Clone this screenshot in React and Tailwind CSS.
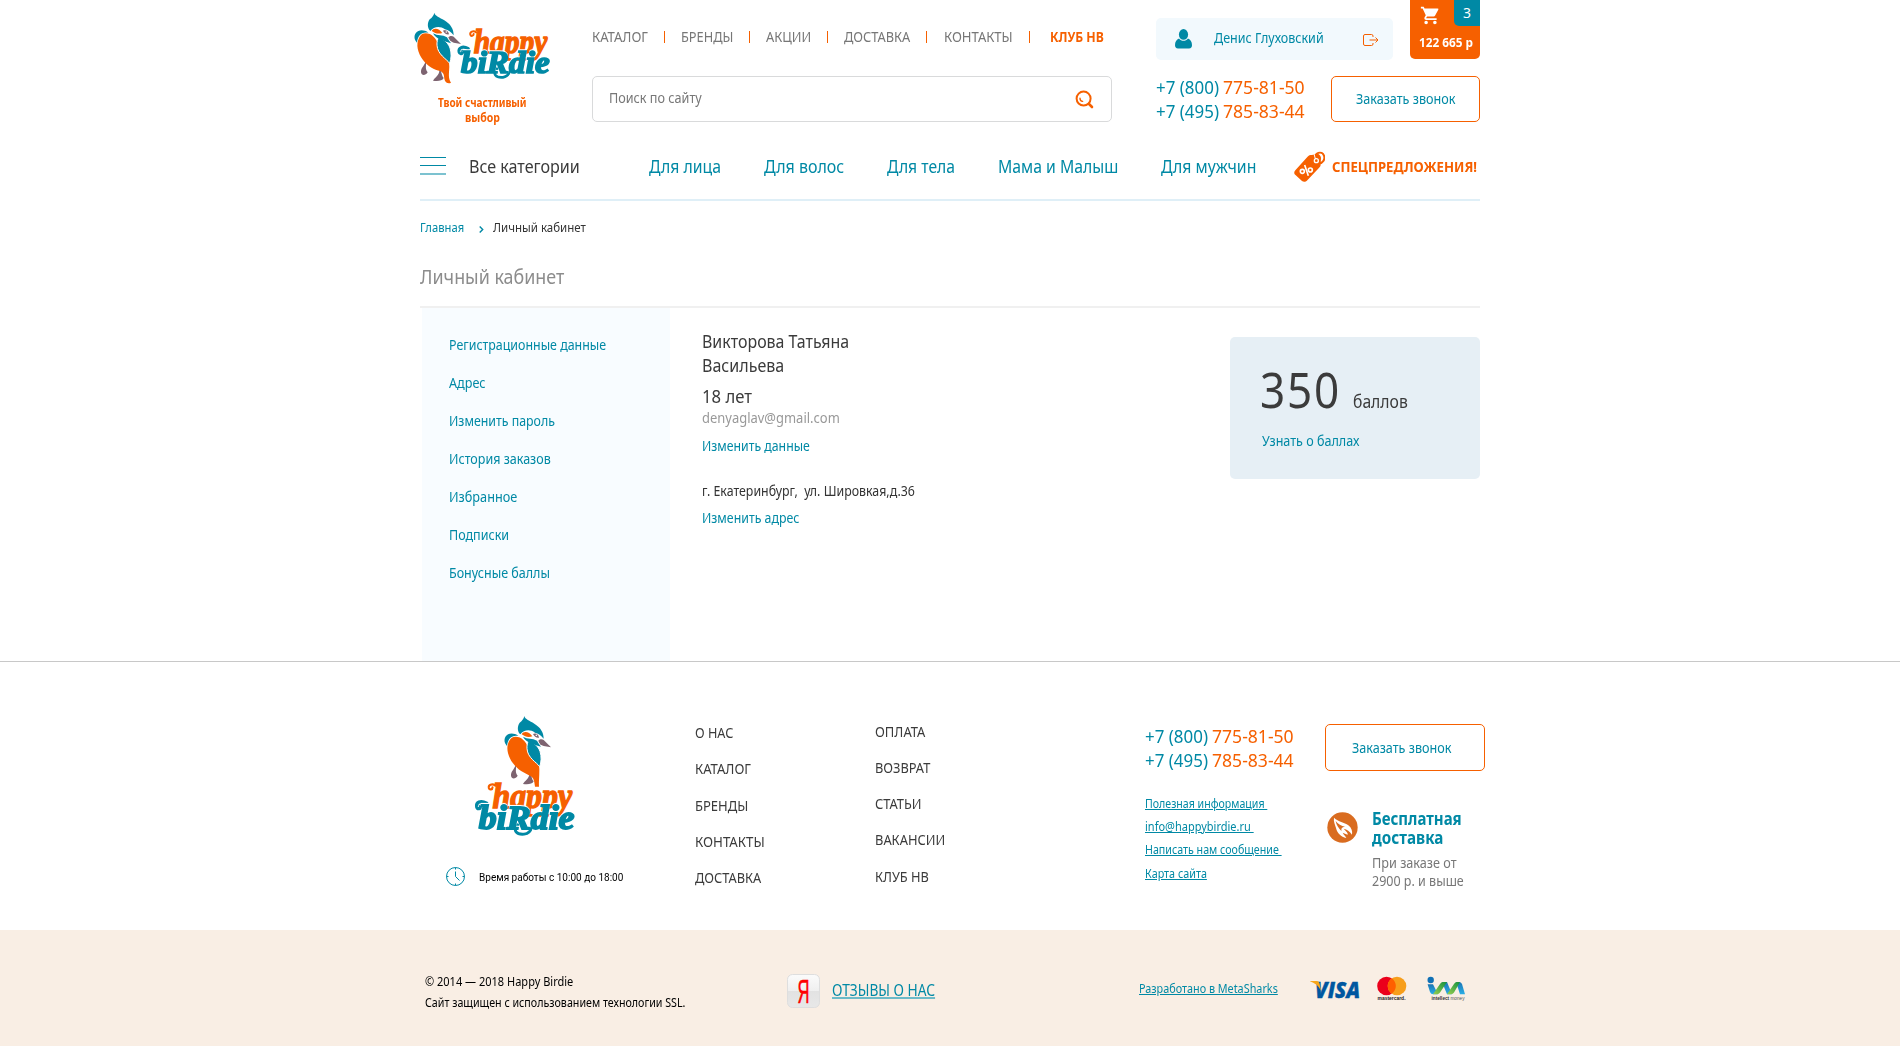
import React, { useLayoutEffect, useRef } from "react";
import { MdShoppingCart } from "react-icons/md";

/* One line of text, condensed to the width of its box.
   Unless flush, a pixel of side bearing is kept on both sides. */
function Fit({ className = "", inner = "", flush = false, children }) {
  const box = useRef(null);
  const text = useRef(null);
  useLayoutEffect(() => {
    const room = box.current.clientWidth - (flush ? 0 : 2);
    text.current.style.transform = `scaleX(${room / text.current.offsetWidth})`;
  }, [children, flush]);
  return (
    <span ref={box} className={`block shrink-0 ${flush ? "" : "pl-px"} ${className}`}>
      <span ref={text} className={`inline-block origin-left whitespace-pre align-top ${inner}`}>
        {children}
      </span>
    </span>
  );
}

function Bird({ foot = true }) {
  return (
    <g>
      <path fill="#7d6370" d="M62 184 C66 196 58 204 68 217 C62 227 50 229 48 217 C47 204 58 198 62 184Z" />
      <path fill="#7d6370" d="M106 208 C110 218 110 228 116 234 C112 243 98 244 84 242 C88 234 104 226 103 210Z" />
      <path
        fill="#f66000"
        d={
          foot
            ? "M62 100 C80 100 92 114 101 134 C112 158 134 168 133 200 C132 222 129 234 138 248 C130 252 120 248 118 236 C117 224 116 219 106 213 C88 209 68 200 54 180 C38 158 32 134 42 114 C47 104 53 100 62 100Z"
            : "M62 100 C80 100 92 114 101 134 C112 158 134 168 133 200 C133 222 131 238 132 250 L120 250 C118 234 117 224 106 218 C88 209 68 200 54 180 C38 158 32 134 42 114 C47 104 53 100 62 100Z"
        }
      />
      <path fill="#0089a5" d="M29 116 C26 98 40 86 60 92 C66 94 68 96 70 98 C50 94 38 106 36 128 C33 124 30 120 29 116Z" />
      <path fill="#0089a5" stroke="#fff" strokeWidth="3" d="M101 110 C112 118 128 124 135 144 C140 160 139 176 134 190 C124 176 98 164 96 136 C95 126 98 116 101 110Z" />
      <path fill="#0089a5" d="M88 38 C90 48 104 52 118 61 C136 72 146 86 146 106 C138 96 130 90 120 88 C104 76 86 80 76 93 C66 84 67 68 74 58 C82 52 86 46 88 38Z" />
      <path fill="#f66000" d="M80 93 C86 82 102 84 112 99 C100 103 90 100 80 93Z" />
      <path fill="#7d6370" d="M114 92 C122 88 130 92 132 103 C124 104 118 100 114 92Z" />
      <circle cx="124" cy="96" r="2.5" fill="#fff" />
      <path fill="#7d6370" d="M130 112 C136 106 142 108 146 110 L168 132 L146 128 C138 126 132 120 130 112Z" />
      <path fill="#0089a5" d="M84 100 C98 108 112 104 126 112 C130 120 134 124 138 130 C120 124 92 118 84 100Z" />
    </g>
  );
}

function Wordmark() {
  return (
    <g fontFamily="'Liberation Serif', serif" fontWeight="700" fontStyle="italic">
      <path d="M214 97 C204 90 194 96 196 104 C198 110 206 108 206 102" fill="none" stroke="#f66000" strokeWidth="6" strokeLinecap="round" />
      <text x="206" y="159" fontSize="98" textLength="221" lengthAdjust="spacingAndGlyphs" fill="#f66000" stroke="#f66000" strokeWidth="4">
        happy
      </text>
      <path d="M190 146 C172 136 160 144 162 156 C164 164 174 162 173 154" fill="none" stroke="#0089a5" strokeWidth="9" strokeLinecap="round" />
      <path d="M276 206 C262 222 272 234 294 232 C306 230 312 224 314 214" fill="none" stroke="#0089a5" strokeWidth="8" strokeLinecap="round" />
      <text
        className="drop-shadow-[0_-3px_0_#fff]"
        x="168"
        y="218"
        fontSize="96"
        textLength="266"
        lengthAdjust="spacingAndGlyphs"
        fill="#0089a5"
        stroke="#0089a5"
        strokeWidth="5"
      >
        biRdie
      </text>
    </g>
  );
}

function Phones() {
  return (
    <div className="text-[18px] leading-6">
      {[
        ["+7 (800)", "775-81-50"],
        ["+7 (495)", "785-83-44"],
      ].map(([code, rest]) => (
        <div key={code} className="flex gap-1">
          <Fit flush className="w-[63px] text-[#0089a5]">{code}</Fit>
          <Fit flush className="w-[82px] text-[#f66000]">{rest}</Fit>
        </div>
      ))}
    </div>
  );
}

function Sep() {
  return <span className="mt-1 block h-3 w-px shrink-0 bg-[#f66000]" />;
}

function Header() {
  return (
    <header>
      <div className="flex h-[122px]">
        <div className="-ml-[7px] flex w-[138px] shrink-0 flex-col items-center pt-3">
          <svg className="overflow-visible" width="138" height="73" viewBox="24 36 414 219">
            <Bird />
            <Wordmark />
          </svg>
          <div className="mt-2.5 flex flex-col items-center text-[12px] font-bold leading-[15px] text-[#f66000]">
            <Fit flush className="w-[89px]">Твой счастливый</Fit>
            <Fit flush className="w-[35px]">выбор</Fit>
          </div>
        </div>

        <div className="ml-[41px] w-[520px] shrink-0">
          <nav className="-ml-px flex gap-[15px] pt-[27px] text-sm text-[#777]">
            <Fit className="w-[58px]">КАТАЛОГ</Fit>
            <Sep />
            <Fit className="w-[54px]">БРЕНДЫ</Fit>
            <Sep />
            <Fit className="w-[47px]">АКЦИИ</Fit>
            <Sep />
            <Fit className="w-[68px]">ДОСТАВКА</Fit>
            <Sep />
            <Fit className="ml-px w-[71px]">КОНТАКТЫ</Fit>
            <Sep />
            <Fit className="ml-1 w-[56px] font-bold text-[#f66000]">КЛУБ НВ</Fit>
          </nav>
          <div className="mt-[29px] flex h-[46px] items-center justify-between rounded-[5px] border border-[#d9dadb] pl-[15px] pr-[17px]">
            <Fit className="-mt-0.5 w-[95px] text-sm text-[#777]">Поиск по сайту</Fit>
            <svg width="19" height="19" viewBox="0 0 19 19" fill="none" stroke="#f66000" strokeWidth="2" strokeLinecap="round">
              <circle cx="8.6" cy="8.6" r="7" />
              <path d="M14 14l3 3" strokeWidth="2.6" />
              <path d="M5 8.2c0 1.9 1 3 2.6 3.2" strokeWidth="1.4" />
            </svg>
          </div>
        </div>

        <div className="ml-11 w-[324px] shrink-0">
          <div className="flex h-[76px] items-start justify-between">
            <div className="mt-[18px] flex h-[42px] w-[237px] items-center rounded-[5px] bg-[#f2f9fd] pl-[19px]">
              <svg width="17" height="20" viewBox="0 0 17 20" fill="#0089a5">
                <ellipse cx="8.5" cy="5.4" rx="4.6" ry="5.3" />
                <path d="M4 9.5c1.2 1.6 2.700 2.300 4.500 2.300s3.300-.7 4.500-2.300c2.500.8 4 3.300 4 6.800 0 2-1 3.200-3 3.200H3c-2 0-3-1.200-3-3.200 0-3.500 1.500-6 4-6.800z" />
              </svg>
              <Fit className="-mt-0.5 ml-[21px] w-[112px] text-sm text-[#0089a5]">Денис Глуховский</Fit>
              <svg className="ml-[38px] mt-0.5" width="16" height="12" viewBox="0 0 16 12" fill="none" stroke="#f66000">
                <path d="M10 3V2Q10 .5 8.500.5H2Q.5.5.5 2v8q0 1.500 1.500 1.500h6.500q1.500 0 1.500-1.500V9" />
                <path d="M6.500 6h8.500M12.500 3.500L15 6l-2.500 2.500" />
              </svg>
            </div>
            <div className="flex h-[59px] w-[70px] flex-col rounded-b-[5px] bg-[#f66000] text-white">
              <div className="flex justify-between pl-2.5">
                <MdShoppingCart className="mt-[5px]" size={21} />
                <span className="flex h-[26px] w-[26px] items-center justify-center rounded-bl-[5px] bg-[#0089a5] text-sm">3</span>
              </div>
              <Fit flush className="ml-[9px] mt-2 w-[54px] text-[12px] font-bold leading-[18px]">122 665 р</Fit>
            </div>
          </div>
          <div className="flex justify-between">
            <div className="-mt-px">
              <Phones />
            </div>
            <button className="flex h-[46px] w-[149px] items-center justify-center rounded-[5px] border border-[#f66000] text-sm text-[#0089a5]">
              <Fit flush className="w-[99px]">Заказать звонок</Fit>
            </button>
          </div>
        </div>
      </div>

      <nav className="mt-7 flex h-[51px] items-start border-b-2 border-[#dfeff7] text-[18px] leading-8 text-[#0089a5]">
        <span className="mt-[7px] flex w-[26px] flex-col gap-[7px]">
          <span className="h-px bg-[#0089a5]" />
          <span className="h-px bg-[#0089a5]" />
          <span className="h-0.5 bg-[#7cc2d0]" />
        </span>
        <Fit className="ml-[22px] w-[113px] text-[#3b3b3b]">Все категории</Fit>
        <Fit className="ml-[67px] w-[74px]">Для лица</Fit>
        <Fit className="ml-[41px] w-[82px]">Для волос</Fit>
        <Fit className="ml-[41px] w-[70px]">Для тела</Fit>
        <Fit flush className="ml-[42px] w-[120px]">Мама и Малыш</Fit>
        <Fit className="ml-[42px] w-[97px]">Для мужчин</Fit>
        <svg className="ml-[37px] mt-px shrink-0" width="31" height="31" viewBox="0 0 93 93">
          <path d="M2 70 C0 66 0 62 4 58 L40 18 C44 13 48 12 54 12 L68 8 C74 7 80 13 81 20 L80 40 C80 46 78 48 74 52 L40 88 C34 94 28 93 24 90Z" fill="#f66000" />
          <path d="M62 26 C60 4 84 -2 90 14 C94 26 86 36 76 37" fill="none" stroke="#f66000" strokeWidth="6" />
          <path d="M60 9 L66 30" stroke="#fff" strokeWidth="3" />
          <circle cx="67" cy="29" r="6" fill="#f66000" stroke="#fff" strokeWidth="4" />
          <g fill="none" stroke="#fff" strokeWidth="5">
            <circle cx="25" cy="61" r="6" />
            <circle cx="49" cy="57" r="6" />
            <path d="M32 42 L43 74" />
          </g>
        </svg>
        <Fit className="ml-1.5 w-[147px] text-[15px] font-bold text-[#f66000]">СПЕЦПРЕДЛОЖЕНИЯ!</Fit>
      </nav>
    </header>
  );
}

const sections = [
  ["Регистрационные данные", "w-[159px]"],
  ["Адрес", "w-[39px]"],
  ["Изменить пароль", "w-[108px]"],
  ["История заказов", "w-[104px]"],
  ["Избранное", "w-[70px]"],
  ["Подписки", "w-[62px]"],
  ["Бонусные баллы", "w-[103px]"],
];

function Account() {
  return (
    <main>
      <div className="mt-4 flex text-[13px] leading-5">
        <Fit flush className="w-[44px] text-[#0089a5]">Главная</Fit>
        <svg className="ml-[15px] mt-[9px]" width="5" height="7" viewBox="0 0 5 7" fill="none" stroke="#0089a5" strokeWidth="1.4">
          <path d="M.7.5l3 3-3 3" />
        </svg>
        <Fit flush className="ml-[9px] w-[93px] text-[#333]">Личный кабинет</Fit>
      </div>
      <div className="mt-[26px] border-b-2 border-[#f0f0f0] pb-[15px]">
        <Fit flush className="w-[144px] text-xl text-[#8c8c8c]">Личный кабинет</Fit>
      </div>
      <div className="flex h-[353px] items-start">
        <aside className="ml-0.5 flex h-full w-[248px] shrink-0 flex-col gap-[18px] bg-[#f8fcff] pl-[26px] pt-[27px] text-sm text-[#0089a5]">
          {sections.map(([label, width]) => (
            <Fit key={label} className={width}>{label}</Fit>
          ))}
        </aside>
        <section className="ml-[31px] pt-[21px] text-sm">
          <div className="text-[18px] leading-6 text-[#3b3b3b]">
            <Fit className="w-[149px]">Викторова Татьяна</Fit>
            <Fit className="w-[84px]">Васильева</Fit>
            <Fit className="mt-[7px] w-[52px]">18 лет</Fit>
          </div>
          <Fit className="w-[140px] text-[#999]">denyaglav@gmail.com</Fit>
          <Fit className="mt-2 w-[110px] text-[#0089a5]">Изменить данные</Fit>
          <Fit className="mt-[25px] w-[215px] text-[#333]">г. Екатеринбург,  ул. Шировкая,д.36</Fit>
          <Fit className="mt-[7px] w-[99px] text-[#0089a5]">Изменить адрес</Fit>
        </section>
        <section className="ml-auto mt-[29px] h-[142px] w-[250px] rounded-[5px] bg-[#e6eff5] pl-[31px] pt-[22px]">
          <div className="flex items-baseline text-[#3b3b3b]">
            <Fit flush className="-ml-px w-[81px] text-[50px] leading-[60px]" inner="tracking-[0.04em]">350</Fit>
            <Fit className="ml-[11px] w-[57px] text-[18px] leading-6">баллов</Fit>
          </div>
          <Fit className="mt-3 w-[99px] text-sm text-[#0089a5]">Узнать о баллах</Fit>
        </section>
      </div>
    </main>
  );
}

function FooterColumn({ className, items }) {
  return (
    <div className={`flex flex-col gap-4 text-sm text-[#3b3b3b] ${className}`}>
      {items.map(([label, width]) => (
        <Fit flush key={label} className={width}>{label}</Fit>
      ))}
    </div>
  );
}

function Footer() {
  return (
    <footer className="border-t border-[#c8c8c8]">
      <div className="mx-auto flex h-[268px] w-[1060px] items-start">
        <div className="ml-[26px] w-[180px] shrink-0 pt-[52px]">
          <svg className="ml-[27px] overflow-visible" width="102" height="122" viewBox="130 42 306 366">
            <g transform="translate(196 10)">
              <Bird foot={false} />
            </g>
            <g transform="translate(-34 152) scale(1.08)">
              <Wordmark />
            </g>
          </svg>
          <div className="mt-[31px] flex h-[19px] items-center">
            <svg width="19" height="19" viewBox="0 0 19 19" fill="none" stroke="#0089a5">
              <circle cx="9.500" cy="9.500" r="9" />
              <path d="M9.500 4.500v5l4 4M9.500.5v2M9.500 16.500v2M.5 9.500h2M16.500 9.500h2" />
            </svg>
            <Fit flush className="ml-3.5 mt-0.5 w-[144px] font-['Roboto',sans-serif] text-[11px] leading-4 text-black">Время работы с 10:00 до 18:00</Fit>
          </div>
        </div>
        <FooterColumn
          className="ml-[69px] w-[180px] shrink-0 pt-[61px]"
          items={[
            ["О НАС", "w-[38px]"],
            ["КАТАЛОГ", "w-[56px]"],
            ["БРЕНДЫ", "mt-px w-[53px]"],
            ["КОНТАКТЫ", "w-[70px]"],
            ["ДОСТАВКА", "w-[66px]"],
          ]}
        />
        <FooterColumn
          className="w-[269px] shrink-0 pt-[60px]"
          items={[
            ["ОПЛАТА", "w-[50px]"],
            ["ВОЗВРАТ", "w-[55px]"],
            ["СТАТЬИ", "w-[47px]"],
            ["ВАКАНСИИ", "w-[70px]"],
            ["КЛУБ НВ", "mt-px w-[54px]"],
          ]}
        />
        <div className="ml-px w-[180px] shrink-0 pt-[62px]">
          <Phones />
          <div className="mt-6 flex flex-col gap-[7px] text-[12px] leading-4 text-[#0089a5]">
            <Fit flush className="w-[122px]" inner="underline">{"Полезная информация "}</Fit>
            <Fit flush className="w-[109px]" inner="underline">{"info@happybirdie.ru "}</Fit>
            <Fit flush className="w-[137px]" inner="underline">{"Написать нам сообщение "}</Fit>
            <Fit flush className="mt-px w-[62px]" inner="underline">Карта сайта</Fit>
          </div>
        </div>
        <div className="w-40 shrink-0 pt-[62px]">
          <button className="flex h-[47px] w-40 items-center rounded-[5px] border border-[#f66000] pl-[25px] text-sm text-[#0089a5]">
            <Fit className="w-[101px]">Заказать звонок</Fit>
          </button>
          <div className="mt-[38px] flex">
            <svg className="ml-0.5 mt-[3px] shrink-0" width="31" height="31" viewBox="0 0 93 93">
              <circle cx="46.500" cy="46.500" r="45.500" fill="#d96c20" />
              <path
                fill="#fff"
                d="M21 17 C34 30 52 30 64 40 C74 48 77 58 75 68 C68 58 60 52 50 50 C58 58 64 64 62 68 C56 66 52 64 47 62 C50 68 56 73 58 78 C42 75 31 64 27 48 C24 38 19 28 21 17Z"
              />
              <path fill="#d96c20" d="M26 27 C32 36 44 42 54 44 C44 45 42 50 44 58 C35 49 28 39 26 27Z" />
            </svg>
            <div className="ml-[13px]">
              <div className="text-[17px] font-bold leading-[19px] text-[#0089a5]">
                <Fit className="w-[92px]">Бесплатная</Fit>
                <Fit className="w-[73px]">доставка</Fit>
              </div>
              <div className="mt-[7px] text-sm leading-[18px] text-[#777]">
                <Fit className="w-[87px]">При заказе от</Fit>
                <Fit className="w-[94px]">2900 р. и выше</Fit>
              </div>
            </div>
          </div>
        </div>
      </div>

      <div className="h-[116px] bg-[#f9eee4]">
        <div className="mx-auto flex w-[1060px] items-start">
          <div className="ml-1 w-[363px] shrink-0 pt-[41px] text-[12.5px] leading-[21px] text-black">
            <Fit className="w-[150px]">© 2014 — 2018 Happy Birdie</Fit>
            <Fit className="w-[262px]">Сайт защищен с использованием технологии SSL.</Fit>
          </div>
          <svg className="mt-11 shrink-0 overflow-visible" width="33" height="34" viewBox="0 0 33 34">
            <defs>
              <linearGradient id="tile" x1="0" y1="0" x2="0" y2="1">
                <stop offset="0" stopColor="#fbfbfb" />
                <stop offset=".5" stopColor="#efefef" />
                <stop offset=".5" stopColor="#e2e2e2" />
                <stop offset="1" stopColor="#e8e8e8" />
              </linearGradient>
            </defs>
            <rect x=".5" y=".5" width="32" height="33" rx="5" fill="url(#tile)" stroke="#dedede" />
            <text x="10.500" y="28.500" fontFamily="'Liberation Sans', sans-serif" fontSize="33" textLength="12" lengthAdjust="spacingAndGlyphs" fill="#f00" stroke="#f00" strokeWidth=".6">
              Я
            </text>
          </svg>
          <Fit className="ml-[11px] mt-[48px] w-[105px] text-base leading-6 text-[#0089a5]" inner="underline decoration-2 decoration-[#6cbac8]">ОТЗЫВЫ О НАС</Fit>
          <Fit flush className="ml-[203px] mt-[49px] w-[139px] text-[13px] leading-[18px] text-[#0089a5]" inner="underline">Разработано в MetaSharks</Fit>
          <svg className="ml-8 mt-[50px] shrink-0 overflow-visible" width="50" height="18" viewBox="0 0 50 18">
            <text x="5" y="17.500" fontFamily="'Open Sans', sans-serif" fontWeight="800" fontStyle="italic" fontSize="23" textLength="45" lengthAdjust="spacingAndGlyphs" fill="#0057a0" stroke="#0057a0" strokeWidth=".4">
              VISA
            </text>
            <path d="M0 1 H7 Q9 1 9.500 3.500 L11 10.500 Q7 3.500 0 1.300Z" fill="#f9a51a" />
          </svg>
          <svg className="ml-4 mt-[46px] shrink-0 overflow-visible" width="31" height="26" viewBox="0 0 31 26">
            <circle cx="10.500" cy="10" r="9.300" fill="#eb001b" />
            <circle cx="21" cy="10" r="9.300" fill="#f79e1b" />
            <path d="M15.750 2.300a9.300 9.300 0 0 1 0 15.400a9.300 9.300 0 0 1 0-15.400z" fill="#ff5f00" />
            <text x="1.500" y="23.700" fontFamily="'Liberation Sans', sans-serif" fontWeight="700" fontSize="5.500" textLength="28" lengthAdjust="spacingAndGlyphs" fill="#222">
              mastercard.
            </text>
          </svg>
          <svg className="ml-5 mt-[46px] shrink-0 overflow-visible" width="38" height="26" viewBox="0 0 38 26">
            <defs>
              <linearGradient id="ribbonBlue" x1="0" y1="0" x2="0" y2="1">
                <stop offset="0" stopColor="#1c75b4" />
                <stop offset="1" stopColor="#2aaee6" />
              </linearGradient>
              <linearGradient id="ribbonGreen" x1="0" y1="1" x2="1" y2="0">
                <stop offset="0" stopColor="#9bd04f" />
                <stop offset="1" stopColor="#12903f" />
              </linearGradient>
            </defs>
            <circle cx="3.700" cy="4" r="3.200" fill="#1070b5" />
            <path d="M.6 8.300H6L11 18.300H6Q4 18.300 3 16Z" fill="url(#ribbonBlue)" />
            <path d="M15 6H20L25 18.300H20Z" fill="url(#ribbonBlue)" />
            <path d="M29 6H32Q34 6 35 8L38 18.300H33Z" fill="url(#ribbonBlue)" />
            <path d="M6 18.300L13 8Q14 6 16 6H20L13 16.500Q12 18.300 10 18.300Z" fill="url(#ribbonGreen)" />
            <path d="M20 18.300L27 8Q28 6 30 6H33L27 16.500Q26 18.300 24 18.300Z" fill="url(#ribbonGreen)" />
            <text x="4.500" y="23.700" fontFamily="'Liberation Sans', sans-serif" fontSize="5" textLength="33" lengthAdjust="spacingAndGlyphs" fill="#555">
              <tspan fontWeight="700" fill="#333">intellect</tspan> money
            </text>
          </svg>
        </div>
      </div>
    </footer>
  );
}

export default function App() {
  return (
    <div className="h-[1047px] overflow-hidden bg-white font-['Noto_Sans',sans-serif] text-sm">
      <div className="mx-auto w-[1060px]">
        <Header />
        <Account />
      </div>
      <Footer />
    </div>
  );
}
